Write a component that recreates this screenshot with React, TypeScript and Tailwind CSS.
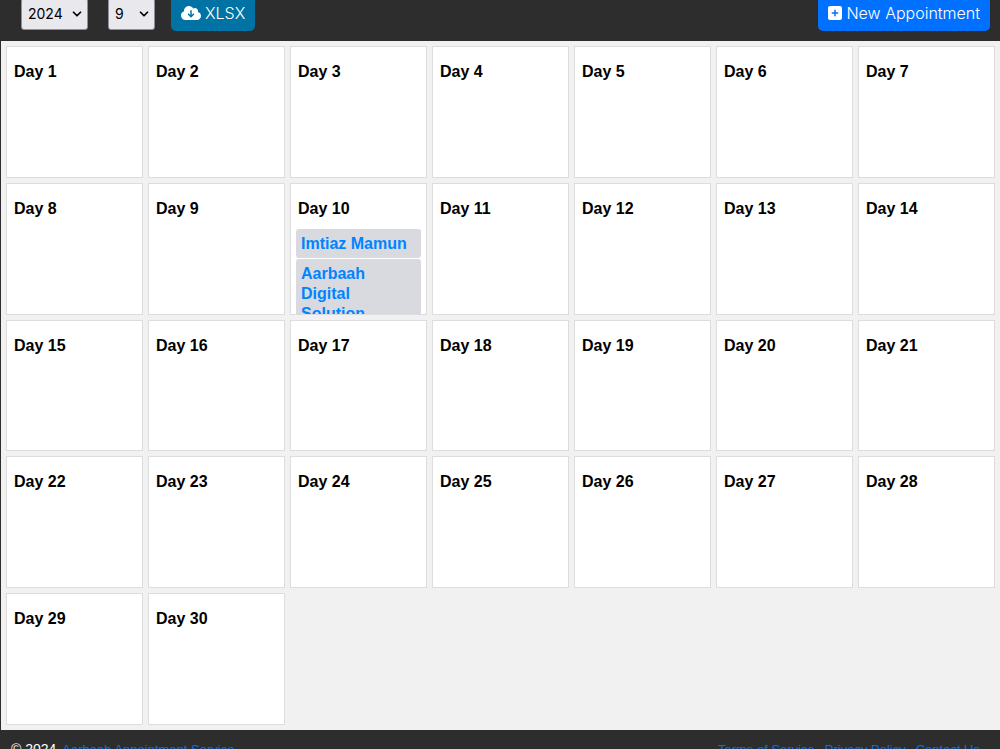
import React from 'react';
import { ChevronDown } from 'lucide-react';
import { FaCloudArrowDown, FaSquarePlus } from 'react-icons/fa6';

const appointments: Record<number, string[]> = {
  10: ['Imtiaz Mamun', 'Aarbaah Digital Solution'],
};

const days = Array.from({ length: 30 }, (_, i) => i + 1);
const years = [2023, 2024, 2025];
const months = Array.from({ length: 12 }, (_, i) => i + 1);

const footerLinks = ['Terms of Service', 'Privacy Policy', 'Contact Us'];

type PickerProps = {
  label: string;
  value: number;
  options: number[];
};

const Picker = ({ label, value, options }: PickerProps) => (
  <div className="relative">
    <select
      aria-label={label}
      defaultValue={value}
      className="h-8 appearance-none rounded-[3px] border border-[#8f8f9d] bg-[#e9e9ed] pr-6 pl-[6px] text-sm text-black"
    >
      {options.map((option) => (
        <option key={option} value={option}>
          {option}
        </option>
      ))}
    </select>
    <ChevronDown
      size={14}
      strokeWidth={3}
      className="pointer-events-none absolute top-[9px] right-1 text-black"
    />
  </div>
);

const DayCell = ({ day }: { day: number }) => (
  <div className="overflow-hidden border border-[#dddddd] bg-white p-[5px] font-bold">
    <h2 className="px-[2px] py-[10px] leading-5 text-black">Day {day}</h2>
    {appointments[day]?.map((name) => (
      <a
        key={name}
        href="#"
        className="mb-px block rounded-[3px] bg-[#d8dae0] px-[5px] pt-[5px] pb-1 leading-5 text-[#0084ff]"
      >
        {name}
      </a>
    ))}
  </div>
);

const App = () => {
  return (
    <div className="h-screen overflow-hidden bg-[#2d2d2d] font-['Liberation_Sans',Arial,sans-serif] text-base">
      <header className="flex h-[41px] items-end justify-between overflow-hidden pr-[10px] pb-[10px] pl-[21px] font-[Inter,sans-serif]">
        <div className="flex items-end">
          <div className="flex gap-5 pb-px">
            <Picker label="Year" value={2024} options={years} />
            <Picker label="Month" value={9} options={months} />
          </div>
          <button className="ml-4 flex h-9 items-center gap-1 rounded-[5px] bg-[#0072a3] px-[10px] font-light text-white">
            <FaCloudArrowDown size={20} />
            XLSX
          </button>
        </div>
        <button className="flex h-9 items-center gap-1 rounded-[5px] bg-[#0070ff] px-[10px] font-light text-white">
          <FaSquarePlus className="h-4 w-[14px]" />
          New Appointment
        </button>
      </header>

      <main className="ml-px grid h-[689px] grid-cols-7 grid-rows-5 gap-[5px] bg-[#f1f1f1] p-[5px]">
        {days.map((day) => (
          <DayCell key={day} day={day} />
        ))}
      </main>

      <footer className="flex items-baseline justify-between pt-[9px] pr-5 pl-[11px] text-sm text-white">
        <p className="flex items-baseline gap-[6px]">
          © 2024
          <a href="#" className="text-[13px] text-[#0070e8]">
            Aarbaah Appointment Service
          </a>
        </p>
        <nav className="flex gap-[10px] text-[13px] text-[#0070e8]">
          {footerLinks.map((link) => (
            <a key={link} href="#">
              {link}
            </a>
          ))}
        </nav>
      </footer>
    </div>
  );
};

export default App;
